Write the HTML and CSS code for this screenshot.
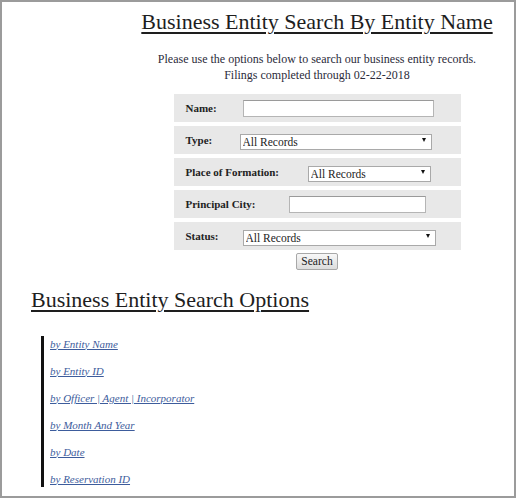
FILE: index.html
```html
<!DOCTYPE html>
<html lang="en">
<head>
  <meta charset="UTF-8">
  <meta name="viewport" content="width=device-width, initial-scale=1.0">
  <title>Business Entity Search</title>
  <link rel="stylesheet" href="styles.css">
</head>
<body>
  <div class="frame">
    <div class="main">
      <h1 class="page-title">Business Entity Search By Entity Name</h1>
      <p class="intro">Please use the options below to search our business entity records.<br>Filings completed through 02-22-2018</p>

      <form class="search" action="#">
        <!-- Name -->
        <div class="row">
          <label class="lbl-name" for="name">Name:</label>
          <input class="in-name" type="text" id="name" name="name">
        </div>

        <!-- Type -->
        <div class="row">
          <label class="lbl-type" for="type">Type:</label>
          <span class="pick in-type"><select id="type" name="type"><option>All Records</option></select></span>
        </div>

        <!-- Place of Formation -->
        <div class="row">
          <label class="lbl-place" for="place">Place of Formation:</label>
          <span class="pick in-place"><select id="place" name="place"><option>All Records</option></select></span>
        </div>

        <!-- Principal City -->
        <div class="row">
          <label class="lbl-city" for="city">Principal City:</label>
          <input class="in-city" type="text" id="city" name="city">
        </div>

        <!-- Status -->
        <div class="row">
          <label class="lbl-status" for="status">Status:</label>
          <span class="pick in-status"><select id="status" name="status"><option>All Records</option></select></span>
        </div>

        <div class="actions">
          <button type="submit">Search</button>
        </div>
      </form>
    </div>

    <h2 class="page-title options-title">Business Entity Search Options</h2>
    <ul class="options">
      <li><a href="#">by Entity Name</a></li>
      <li><a href="#">by Entity ID</a></li>
      <li><a href="#">by Officer | Agent | Incorporator</a></li>
      <li><a href="#">by Month And Year</a></li>
      <li><a href="#">by Date</a></li>
      <li><a href="#">by Reservation ID</a></li>
    </ul>
  </div>
</body>
</html>
```

FILE: styles.css
```css
/* General Styles */
body {
  margin: 0;
  font-family: "Liberation Serif", "Times New Roman", serif;
  color: #2b2b3a;
  background: #ffffff;
}

.frame {
  width: 512px;
  height: 494px;
  border: 2px solid #9b9b9b;
  overflow: hidden;
}

/* Headings */
.page-title {
  margin: 0;
  font-size: 22px;
  font-weight: normal;
  line-height: 28px;
  color: #1e1e1e;
  text-decoration: underline;
  text-decoration-thickness: 2px;
  text-underline-offset: 3px;
}

.main {
  width: 400px;
  margin-left: 115px;
  text-align: center;
}

.main .page-title {
  padding-top: 6px;
}

.intro {
  margin: 15px 0 0;
  font-size: 12px;
  line-height: 16px;
}

/* Form Styles */
.search {
  width: 287px;
  margin: 11px auto 0;
  text-align: left;
}

.row {
  display: flex;
  align-items: center;
  height: 28px;
  margin-bottom: 4px;
  padding-left: 12px;
  background: #e8e8e8;
}

.row label {
  flex: none;
  font-size: 11px;
  font-weight: bold;
  color: #222;
}

.lbl-name { width: 57px; }
.lbl-type { width: 54px; }
.lbl-place { width: 122px; }
.lbl-city { width: 103px; }
.lbl-status { width: 57px; }

.row input {
  box-sizing: border-box;
  height: 17px;
  margin: 0;
  padding: 0 3px;
  border: 1px solid #b5b5b5;
  border-top-color: #9a9a9a;
  background: #fff;
  font: 11.5px "Liberation Serif", serif;
}

.in-name { width: 191px; }
.in-city { width: 137px; }

/* Select boxes with a small arrow */
.pick {
  position: relative;
  display: block;
  height: 16px;
}

.pick select {
  box-sizing: border-box;
  width: 100%;
  height: 16px;
  margin: 0;
  padding: 0 0 0 2px;
  border: 1px solid #a9a9a9;
  border-radius: 0;
  background: #fff;
  appearance: none;
  -webkit-appearance: none;
  font: 11.5px "Liberation Serif", serif;
  color: #222;
}

.pick::after {
  content: "";
  position: absolute;
  right: 6px;
  top: 6px;
  border-left: 2.5px solid transparent;
  border-right: 2.5px solid transparent;
  border-top: 4px solid #111;
}

.in-type { width: 192px; }
.in-place { width: 123px; }
.in-status { width: 193px; }

.actions {
  text-align: center;
  margin-top: -3px;
}

button {
  height: 17px;
  padding: 0 4px;
  border: 1px solid #a8a8a8;
  border-radius: 2px;
  background: linear-gradient(#f8f8f8, #dcdcdc);
  font: 11.5px "Liberation Serif", serif;
  color: #222;
  cursor: pointer;
}

/* Search options list */
.options-title {
  margin: 16px 0 0 29px;
}

.options {
  list-style: none;
  margin: 22px 0 0 39px;
  padding: 0 0 0 6px;
  border-left: 3px solid #111;
  width: 300px;
}

.options li {
  height: 16px;
  margin-bottom: 11px;
  font-size: 11px;
  line-height: 16px;
}

.options li:last-child {
  margin-bottom: 0;
}

.options a {
  color: #3d5c9c;
  font-style: italic;
}
```
